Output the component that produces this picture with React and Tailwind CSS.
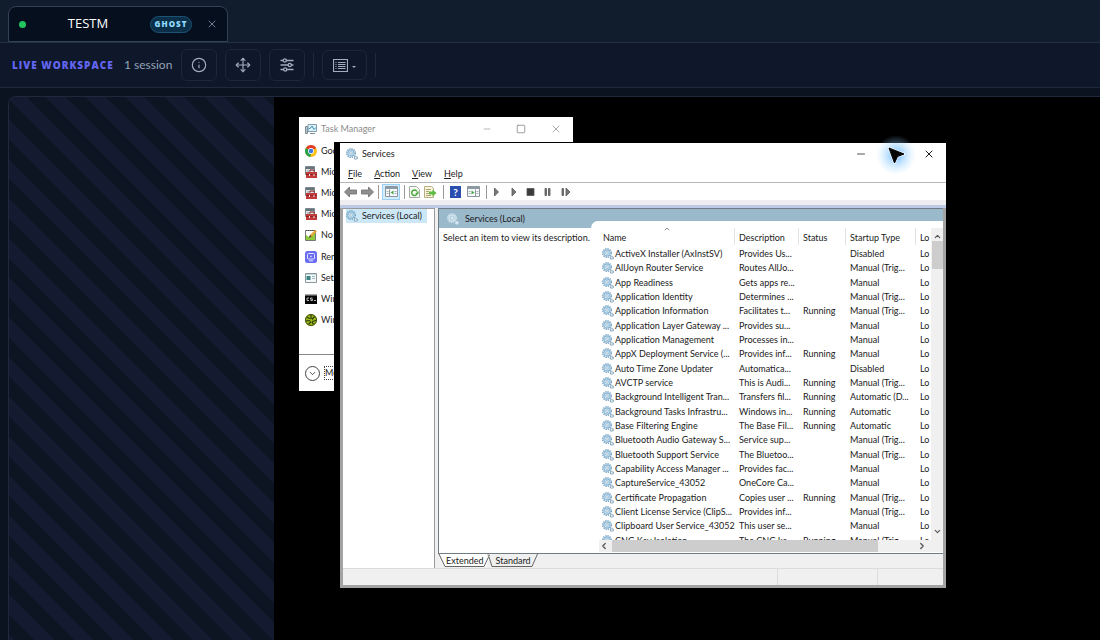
import { useState } from 'react'
import { Info, Move, X, Minus, Square, ChevronDown, ChevronUp, ChevronLeft, ChevronRight } from 'lucide-react'

const services = [
  ['ActiveX Installer (AxInstSV)', 'Provides Us...', '', 'Disabled'],
  ['AllJoyn Router Service', 'Routes AllJo...', '', 'Manual (Trig...'],
  ['App Readiness', 'Gets apps re...', '', 'Manual'],
  ['Application Identity', 'Determines ...', '', 'Manual (Trig...'],
  ['Application Information', 'Facilitates t...', 'Running', 'Manual (Trig...'],
  ['Application Layer Gateway ...', 'Provides su...', '', 'Manual'],
  ['Application Management', 'Processes in...', '', 'Manual'],
  ['AppX Deployment Service (...', 'Provides inf...', 'Running', 'Manual'],
  ['Auto Time Zone Updater', 'Automatica...', '', 'Disabled'],
  ['AVCTP service', 'This is Audi...', 'Running', 'Manual (Trig...'],
  ['Background Intelligent Tran...', 'Transfers fil...', 'Running', 'Automatic (D...'],
  ['Background Tasks Infrastru...', 'Windows in...', 'Running', 'Automatic'],
  ['Base Filtering Engine', 'The Base Fil...', 'Running', 'Automatic'],
  ['Bluetooth Audio Gateway S...', 'Service sup...', '', 'Manual (Trig...'],
  ['Bluetooth Support Service', 'The Bluetoo...', '', 'Manual (Trig...'],
  ['Capability Access Manager ...', 'Provides fac...', '', 'Manual'],
  ['CaptureService_43052', 'OneCore Ca...', '', 'Manual'],
  ['Certificate Propagation', 'Copies user ...', 'Running', 'Manual (Trig...'],
  ['Client License Service (ClipS...', 'Provides inf...', '', 'Manual (Trig...'],
  ['Clipboard User Service_43052', 'This user se...', '', 'Manual'],
  ['CNG Key Isolation', 'The CNG ke...', 'Running', 'Manual (Trig...'],
]

const tasks = [
  ['Goo', ChromeIcon],
  ['Mic', ToolboxIcon],
  ['Mic', ToolboxIcon],
  ['Mic', ToolboxIcon],
  ['No', NotepadIcon],
  ['Ren', RemoteIcon],
  ['Set', SettingsIcon],
  ['Win', ConsoleIcon],
  ['Win', GlobeIcon],
]

function ChromeIcon() {
  return (
    <svg className="size-3 shrink-0" viewBox="0 0 24 24">
      <circle cx="12" cy="12" r="12" fill="#fbc116" />
      <path d="M12 12 1.6 6A12 12 0 0 1 22.4 6z" fill="#e33b2e" />
      <path d="M12 12 1.6 6A12 12 0 0 0 11 24z" fill="#2da04e" />
      <circle cx="12" cy="12" r="5.8" fill="#fff" />
      <circle cx="12" cy="12" r="4.4" fill="#3a7be0" />
    </svg>
  )
}

function ToolboxIcon() {
  return (
    <svg className="size-3 shrink-0" viewBox="0 0 12 12">
      <path d="M0.5 0.5h9v8h-9z" fill="#dfe4e6" stroke="#7b878d" />
      <path d="M1 1h8v2H1z" fill="#66747c" />
      <path d="M2 5h3" stroke="#8f9ba0" />
      <path d="M5 5.5V4h4v1.5" fill="none" stroke="#7d1414" />
      <path d="M1 6h11v6H1z" fill="#c23a3a" />
      <path d="M1 8.5H12" stroke="#8d2020" />
      <path d="M4 8h1v2H4zM8.500 8h1v2h-1z" fill="#eee" />
    </svg>
  )
}

function NotepadIcon() {
  return (
    <svg className="size-3 shrink-0" viewBox="0 0 12 12">
      <path d="M0.5 1.5h10v10h-10z" fill="#fff" stroke="#777" />
      <path d="M1 6l3 2 6-5v8H1z" fill="#8ccb3c" />
      <path d="M1 1.5h9" stroke="#444" strokeDasharray="1 1" />
      <path d="M4 9l1-3 5-5 2 1.5-5 5z" fill="#e3a73a" />
      <path d="M4 9l1-3 1.5 1.5z" fill="#333" />
    </svg>
  )
}

function RemoteIcon() {
  return (
    <svg className="size-3 shrink-0" viewBox="0 0 12 12">
      <rect width="12" height="12" rx="2.5" fill="#6a6df0" />
      <rect x="2.5" y="2.5" width="7" height="5.5" rx="1" fill="none" stroke="#dfe3ff" />
      <path d="M4 9.8h4M5 5.300h2" stroke="#dfe3ff" />
    </svg>
  )
}

function SettingsIcon() {
  return (
    <svg className="size-3 shrink-0" viewBox="0 0 12 12">
      <path d="M0.5 1.5h11v9h-11z" fill="#f5f8f8" stroke="#8a9799" />
      <path d="M1.5 4h4v4h-4z" fill="#3c8484" />
      <path d="M7 4.5h3M7 6.5h3" stroke="#9fb7c0" />
      <path d="M1 2.5h10" stroke="#c3dbe0" />
    </svg>
  )
}

function ConsoleIcon() {
  return (
    <svg className="size-3 shrink-0" viewBox="0 0 12 12">
      <path d="M0 1h12v10H0z" fill="#060606" />
      <path d="M0 1h12v1.5H0z" fill="#a9a9a9" />
      <path d="M4 5H2v2.5h2M7.5 5h-2v1.2h2v1.3h-2M9 7.5h2" fill="none" stroke="#ddd" strokeWidth="0.8" />
    </svg>
  )
}

function GlobeIcon() {
  return (
    <svg className="size-3 shrink-0" viewBox="0 0 12 12">
      <circle cx="6" cy="6" r="6" fill="#9dbb1c" />
      <path d="M6 1v4M2 3.500l3 1M9.500 2.500L7 5.500M1 7l4-.5M11 6.500l-4 1M3.500 10.300L6 7.500M8.500 10.300L7 8" stroke="#2b3808" strokeWidth="1.2" />
      <circle cx="6" cy="6" r="5.5" fill="none" stroke="#3c4d0c" />
    </svg>
  )
}

function TaskManagerIcon() {
  return (
    <svg className="size-3 shrink-0" viewBox="0 0 12 12">
      <path d="M0.5 3.5h2v7h-2z" fill="#b9c4c9" stroke="#7f8d94" />
      <path d="M3 1.5h8.5v7H3z" fill="#dff1f8" stroke="#7f9fae" />
      <path d="M3.5 6l2-1 1.5-2 2 3.5 2-2" fill="none" stroke="#3a8fb8" />
      <path d="M5 10.5h5" stroke="#7f8d94" />
    </svg>
  )
}

function Gear({ pale = false }) {
  return (
    <svg className="size-3 shrink-0" viewBox="0 0 12 12" fill="none">
      <circle cx="5" cy="5" r="4.4" stroke={pale ? '#d5e6f0' : '#6f9fc0'} strokeWidth="1.2" strokeDasharray="1.3 1" />
      <circle cx="5" cy="5" r="3.2" fill={pale ? '#b4d0e0' : '#cfe6f5'} stroke={pale ? '#d5e6f0' : '#88b4d2'} strokeWidth="1.2" />
      <circle cx="5" cy="5" r="1.3" fill="#fff" stroke={pale ? '#a9c6d8' : '#6f9fc0'} strokeWidth="0.6" />
      <circle cx="9.8" cy="9.8" r="1.5" fill="#dcebf5" stroke={pale ? '#c6dbe7' : '#7899ae'} strokeWidth="1.1" strokeDasharray="1 0.5" />
    </svg>
  )
}

function SlidersIcon() {
  return (
    <svg className="size-4" viewBox="0 0 16 16" fill="none" stroke="currentColor" strokeWidth="1.3" strokeLinecap="round">
      <path d="M2 3.5h2M7.5 3.5H14M2 8h7M12.5 8H14M2 12.5h2.5M8 12.5h6" />
      <circle cx="5.8" cy="3.5" r="1.6" />
      <circle cx="10.7" cy="8" r="1.6" />
      <circle cx="6.2" cy="12.5" r="1.6" />
    </svg>
  )
}

function KeyboardIcon() {
  return (
    <svg className="h-[13px] w-[15px]" viewBox="0 0 15 13" fill="none" stroke="currentColor">
      <path d="M0.5 0.5h14v12h-14z" strokeWidth="1.2" />
      <path d="M2.5 3.5h1M5 3.5h7.5M2.5 5.5h1M5 5.5h7.5M2.5 7.5h1M5 7.5h7.5M2.5 9.5h1M5 9.5h7.5" />
    </svg>
  )
}

function ArrowIcon({ flip = false }) {
  return (
    <svg className="h-3 w-[13px]" viewBox="0 0 13 12">
      <path
        d={flip ? 'M12.5 6L7.5 1v3H.5v4h7v3z' : 'M.5 6L5.5 1v3h7v4h-7v3z'}
        fill="#8f8f8f"
        stroke="#6c6c6c"
        strokeWidth="0.8"
      />
    </svg>
  )
}

function PaneIcon({ right = false }) {
  return (
    <svg className="h-[11px] w-[13px]" viewBox="0 0 13 11">
      <path d="M.5 .5h12v10H.5z" fill="#f7f9fa" stroke="#8b979d" />
      <path d="M1 1h11v2H1z" fill="#8a9ba4" />
      <path d={right ? 'M8.5 3.5v7' : 'M4.5 3.5v7'} stroke="#8b979d" />
      <path d="M1.5 5.5h2M1.5 7.5h2M9.5 5.5h2M9.5 7.5h2" stroke="#a8b3b8" />
      <path d={right ? 'M4.5 4.5l3 2-3 2z' : 'M8.5 4.5l-3 2 3 2z'} fill="#48a848" />
    </svg>
  )
}

function RefreshIcon() {
  return (
    <svg className="h-3 w-[11px]" viewBox="0 0 11 12">
      <path d="M.5 .5h7l3 3v8H.5z" fill="#f6faf3" stroke="#a3aca0" />
      <path d="M8 5.5A2.8 2.8 0 1 0 8 8" fill="none" stroke="#4aa93c" strokeWidth="1.5" />
      <path d="M6 8h3.5V5z" fill="#4aa93c" />
    </svg>
  )
}

function ExportIcon() {
  return (
    <svg className="h-3 w-[13px]" viewBox="0 0 13 12">
      <path d="M.5 .5h7l2 2v9h-9z" fill="#fbf6d8" stroke="#b4ac86" />
      <path d="M2 3.5h5M2 5.5h3M2 7.5h3M2 9.5h5" stroke="#a9a27f" />
      <path d="M5 5.5h3.5v-2l4 3.5-4 3.5v-2H5z" fill="#5dbb43" />
    </svg>
  )
}

function Cursor() {
  return (
    <svg className="absolute left-[604px] top-10 size-9 overflow-visible" viewBox="0 0 36 36">
      <defs>
        <radialGradient id="glow">
          <stop offset="0" stopColor="#4aa8ff" stopOpacity="0.85" />
          <stop offset="0.5" stopColor="#7cc4ff" stopOpacity="0.4" />
          <stop offset="1" stopColor="#aaddff" stopOpacity="0" />
        </radialGradient>
      </defs>
      <circle cx="18" cy="18" r="20" fill="url(#glow)" />
      <path d="M11 11l15 6-6.5 2.5L16.500 26z" fill="#050505" stroke="#fff" strokeWidth="2.6" strokeLinejoin="round" opacity="0.7" />
      <path d="M11 11l15 6-6.5 2.5L16.500 26z" fill="#050505" stroke="#050505" strokeWidth="1" strokeLinejoin="round" />
    </svg>
  )
}

function ToolButton({ label, children }) {
  return (
    <button
      type="button"
      aria-label={label}
      className="flex h-8 w-9 items-center justify-center rounded-md border border-[#1d2739] text-[#a3adbd]"
    >
      {children}
    </button>
  )
}

function Separator() {
  return <span className="h-3.5 w-px bg-[#9a9a9a]" />
}

function TaskManager() {
  return (
    <section className="absolute left-[25px] top-5 flex h-[274px] w-[274px] flex-col bg-white pl-1.5">
      <header className="flex h-[23px] items-center gap-1 text-[#8c8c8c]">
        <TaskManagerIcon />
        <h2>Task Manager</h2>
        <div className="ml-auto flex items-center gap-6 pr-[11px]">
          <button type="button" aria-label="Minimize"><Minus size={10} strokeWidth={1.5} /></button>
          <button type="button" aria-label="Maximize"><Square size={10} strokeWidth={2} /></button>
          <button type="button" aria-label="Close"><X size={12} strokeWidth={1.5} /></button>
        </div>
      </header>
      <ul className="grid h-[191px] auto-rows-fr">
        {tasks.map(([name, Icon], i) => (
          <li key={i} className="flex items-center gap-1">
            <Icon />
            <span>{name}</span>
          </li>
        ))}
      </ul>
      <footer className="-ml-1.5 mt-auto flex h-[37px] items-center gap-1 border-t border-[#888] pl-1.5">
        <span className="flex size-[15px] items-center justify-center rounded-full border border-[#444]">
          <ChevronDown size={9} />
        </span>
        <button type="button" className="border border-dotted border-[#444] leading-3">Mo</button>
      </footer>
    </section>
  )
}

function ServicesTable() {
  const cols = 'grid grid-cols-[136px_64px_47px_70px_15px]'
  const head = 'border-r border-[#e2e2e2] pl-1 pt-[3px] text-left font-normal'
  return (
    <table className="block w-[332px] shrink-0 overflow-hidden">
      <thead className="block h-[19px]">
        <tr className={cols}>
          <th className={`relative ${head}`}>
            Name
            <ChevronUp size={8} className="absolute -top-[3px] left-16 text-[#555]" />
          </th>
          <th className={head}>Description</th>
          <th className={head}>Status</th>
          <th className={head}>Startup Type</th>
          <th className="pl-1 pt-[3px] text-left font-normal">Lo</th>
        </tr>
      </thead>
      <tbody className="grid h-[301px] auto-rows-fr">
        {services.map(([name, description, status, startup]) => (
          <tr key={name} className={cols}>
            <td className="flex items-center gap-px whitespace-nowrap pl-[3px]">
              <Gear />
              {name}
            </td>
            <td className="whitespace-nowrap pl-1">{description}</td>
            <td className="whitespace-nowrap pl-1">{status}</td>
            <td className="whitespace-nowrap pl-1">{startup}</td>
            <td className="whitespace-nowrap pl-1">Lo</td>
          </tr>
        ))}
      </tbody>
    </table>
  )
}

function ServicesWindow() {
  const [view, setView] = useState('Extended')
  return (
    <section className="absolute left-[60px] top-[45px] w-[612px] bg-black pl-1.5 pt-px">
      <div className="flex h-[445px] flex-col bg-white">
        <header className="flex h-[22px] shrink-0 items-center gap-1 pl-1.5">
          <Gear />
          <h2>Services</h2>
          <div className="ml-auto flex items-center gap-14 pr-[11px]">
            <button type="button" aria-label="Minimize"><Minus size={12} strokeWidth={1.5} /></button>
            <button type="button" aria-label="Close"><X size={12} strokeWidth={2} /></button>
          </div>
        </header>
        <nav className="flex h-[18px] shrink-0 items-center gap-3 border-b border-[#b5b8bb] pl-2">
          <button type="button"><u>F</u>ile</button>
          <button type="button"><u>A</u>ction</button>
          <button type="button"><u>V</u>iew</button>
          <button type="button"><u>H</u>elp</button>
        </nav>
        <div className="flex h-[17px] shrink-0 items-center pl-1">
          <div className="flex w-[38px] items-center gap-1">
            <button type="button" aria-label="Back"><ArrowIcon /></button>
            <button type="button" aria-label="Forward"><ArrowIcon flip /></button>
            <Separator />
          </div>
          <button type="button" aria-label="Console tree" className="flex h-4 w-[18px] items-center justify-center border border-[#9bd0f5] bg-[#d5ecfb]">
            <PaneIcon />
          </button>
          <div className="flex items-center gap-1 pl-1">
            <Separator />
            <button type="button" aria-label="Refresh"><RefreshIcon /></button>
            <button type="button" aria-label="Export list"><ExportIcon /></button>
          </div>
          <div className="flex items-center gap-1.5 pl-1.5">
            <Separator />
            <button type="button" aria-label="Help" className="h-3 w-[11px] bg-[#2b4fae] text-[10px] font-bold leading-3 text-white">?</button>
            <button type="button" aria-label="Action pane"><PaneIcon right /></button>
            <Separator />
          </div>
          <svg className="ml-1.5 h-3 w-20" viewBox="0 0 80 12" fill="#777" stroke="#555" strokeWidth="0.8">
            <path d="M1.5 2l4 4-4 4zM19 2l4 4-4 4z" />
            <path d="M34 2.5h7v7h-7z" fill="#3b3b3b" />
            <path d="M52 2.5h1.5v7H52zM55.500 2.5H57v7h-1.5zM69 2.5h1.5v7H69zM73 2l4 4-4 4z" />
          </svg>
        </div>
        <div className="h-[5px] shrink-0 bg-[#efedf0]" />
        <div className="h-[3px] shrink-0 bg-[#bccae6]" />

        <div className="flex min-h-0 flex-1 flex-col border-x-[3px] border-b-[3px] border-[#a3a3a3] bg-[#f0f0f0]">
          <div className="flex min-h-0 flex-1 gap-[3px]">
            <aside className="w-[92px] border-r border-t border-[#9a9a9a] bg-white px-[3px]">
              <button type="button" className="flex h-3.5 w-[81px] items-center gap-1 bg-[#cce8f7]">
                <Gear />
                <span className="whitespace-nowrap">Services (Local)</span>
              </button>
            </aside>
            <div className="flex min-w-0 flex-1 flex-col">
              <div className="flex flex-1 flex-col border-b border-l border-t border-[#6f7c84] bg-white">
                <div className="h-3 bg-[#9ab9cb]" />
                <div className="flex min-h-0 flex-1">
                  <div className="w-[160px]">
                    <div className="-mt-3 flex h-[19px] items-center gap-1.5 bg-[#9ab9cb] pl-2">
                      <Gear pale />
                      <span>Services (Local)</span>
                    </div>
                    <p className="whitespace-nowrap pl-1 pt-[3px]">Select an item to view its description.</p>
                  </div>
                  <div className="flex min-w-0 flex-1 flex-col">
                    <div className="-ml-2 h-[7px] shrink-0 rounded-tl-lg bg-white" />
                    <div className="flex h-[312px] overflow-hidden">
                      <ServicesTable />
                      <div className="flex w-3 flex-col items-center justify-between bg-[#f0f0f0] py-1">
                        <ChevronUp size={9} strokeWidth={3} className="text-[#555]" />
                        <span className="mb-auto h-7 w-[11px] bg-[#cdcdcd]" />
                        <ChevronDown size={9} strokeWidth={3} className="text-[#555]" />
                      </div>
                    </div>
                    <div className="flex h-3 items-center bg-[#f0f0f0]">
                      <ChevronLeft size={10} strokeWidth={3} className="text-[#555]" />
                      <span className="ml-[3px] h-full w-[266px] bg-[#cdcdcd]" />
                      <ChevronRight size={10} strokeWidth={3} className="ml-auto mr-4 text-[#555]" />
                    </div>
                  </div>
                </div>
              </div>
              <div className="relative flex h-[14px] items-center">
                <svg className="absolute left-0 top-0 h-[13px] w-[102px]" viewBox="0 0 102 13" fill="none" stroke="#666">
                  <path d="M1 0l6 12.5h41L53 0z" fill="#fff" stroke="none" />
                  <path d="M1 0l6 12.5h39L51.500 1h-2M51 3l3 9.500h40L99.500 0" />
                </svg>
                <div className="relative flex gap-3 pl-2">
                  {['Extended', 'Standard'].map((name) => (
                    <button key={name} type="button" aria-pressed={view === name} onClick={() => setView(name)}>
                      {name}
                    </button>
                  ))}
                </div>
              </div>
            </div>
          </div>
          <footer className="flex h-[17px] shrink-0 justify-end border-t border-[#dcdcdc]">
            <span className="w-[100px] border-l border-[#dcdcdc]" />
            <span className="w-[66px] border-l border-[#dcdcdc]" />
          </footer>
        </div>
      </div>
    </section>
  )
}

export default function App() {
  return (
    <div className="flex h-screen flex-col overflow-hidden bg-[#0b1220] font-['Open_Sans','Noto_Sans',sans-serif]">
      {/* Session tabs */}
      <header className="flex h-[43px] shrink-0 items-end border-b border-[#233044] bg-[#111c2d] pl-2">
        <div className="flex h-9 w-[220px] items-center rounded-t-lg border border-[#334155] bg-[#050f1e] pl-2.5 pr-[9px]">
          <span className="size-[7px] rounded-full bg-[#22c55e]" />
          <span className="flex-1 text-center text-[13px] text-white">TESTM</span>
          <span className="flex h-[17px] w-[42px] items-center justify-center rounded-full border border-[#1c5272] bg-[#0b2e49] text-[8px] font-extrabold tracking-[1px] text-[#8fdcff]">
            GHOST
          </span>
          <button type="button" aria-label="Close session" className="ml-3.5 text-[#94a3b8]">
            <X size={12} strokeWidth={1.5} />
          </button>
        </div>
      </header>

      {/* Workspace toolbar */}
      <div className="flex h-[45px] shrink-0 items-center border-b border-[#1e293b] bg-[#0f172a] pl-3">
        <h1 className="w-[112px] whitespace-nowrap text-[10px] font-extrabold tracking-[1px] text-[#6366f1]">LIVE WORKSPACE</h1>
        <span className="w-[57px] whitespace-nowrap font-['Lato',sans-serif] text-xs text-[#94a3b8]">1 session</span>
        <div className="flex items-center gap-2">
          <ToolButton label="Info"><Info size={16} strokeWidth={1.75} /></ToolButton>
          <ToolButton label="Move"><Move size={16} strokeWidth={1.75} /></ToolButton>
          <ToolButton label="Settings"><SlidersIcon /></ToolButton>
          <span className="h-6 w-px bg-[#1e293b]" />
          <button
            type="button"
            aria-label="Keyboard"
            className="flex h-[30px] w-[45px] items-center justify-center gap-1 rounded-md border border-[#1d2739] text-[#a3adbd]"
          >
            <KeyboardIcon />
            <svg className="mt-1 size-1" viewBox="0 0 4 4"><path d="M0 1h4L2 3z" fill="currentColor" /></svg>
          </button>
          <span className="h-6 w-px bg-[#1e293b]" />
        </div>
      </div>

      {/* Remote desktop */}
      <main className="flex min-h-0 flex-1 pl-2 pt-2">
        <div className="flex flex-1 overflow-hidden rounded-tl-lg border-l border-t border-[#1e293b] bg-black">
          <aside className="w-[265px] shrink-0 bg-[repeating-linear-gradient(45deg,#141b31_0,#141b31_4px,#0d1523_4px,#0d1523_18px,#141b31_18px,#141b31_28px)]" />
          <div className="relative flex-1 font-['Lato','Open_Sans',sans-serif] text-[9px] leading-[14px] text-[#1a1a1a]">
            <TaskManager />
            <ServicesWindow />
            <Cursor />
          </div>
        </div>
      </main>
    </div>
  )
}
